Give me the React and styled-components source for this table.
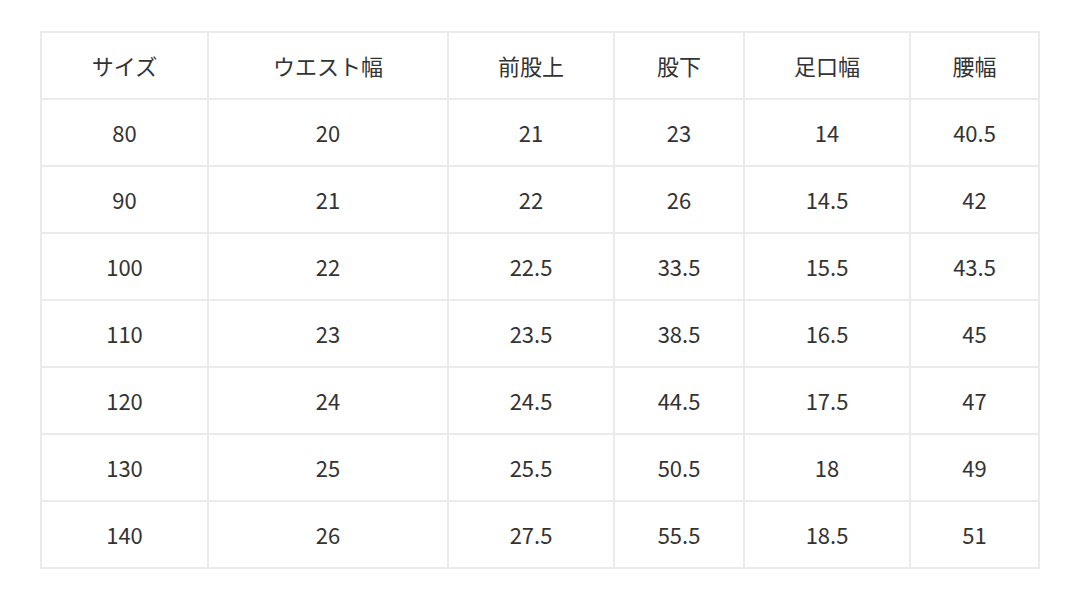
import { createGlobalStyle, styled } from "styled-components";

const GlobalStyle = createGlobalStyle`
  body {
    margin: 0;
    background: #ffffff;
    font-family: "Noto Sans CJK JP", "Noto Sans", sans-serif;
  }
`;

const headers = ["サイズ", "ウエスト幅", "前股上", "股下", "足口幅", "腰幅"];
const widths = [167, 240, 166, 130, 166, 129];
const rows = [
  ["80", "20", "21", "23", "14", "40.5"],
  ["90", "21", "22", "26", "14.5", "42"],
  ["100", "22", "22.5", "33.5", "15.5", "43.5"],
  ["110", "23", "23.5", "38.5", "16.5", "45"],
  ["120", "24", "24.5", "44.5", "17.5", "47"],
  ["130", "25", "25.5", "50.5", "18", "49"],
  ["140", "26", "27.5", "55.5", "18.5", "51"],
];

export default function App() {
  return (
    <SPage>
      <GlobalStyle />
      <STable>
        <colgroup>
          {widths.map((w, i) => (
            <col key={i} style={{ width: w }} />
          ))}
        </colgroup>
        <thead>
          <tr>
            {headers.map((h) => (
              <SCell as="th" key={h}>
                {h}
              </SCell>
            ))}
          </tr>
        </thead>
        <tbody>
          {rows.map((r) => (
            <tr key={r[0]}>
              {r.map((v, i) => (
                <SCell key={i}>{v}</SCell>
              ))}
            </tr>
          ))}
        </tbody>
      </STable>
    </SPage>
  );
}

const SPage = styled.div`
  padding: 31px 40px;
`;

const STable = styled.table`
  width: 998px;
  table-layout: fixed;
  border-collapse: collapse;
  border: 2px solid #ebebeb;
`;

const SCell = styled.td`
  height: 63px;
  padding: 0 0 2px;
  border: 2px solid #ebebeb;
  text-align: center;
  vertical-align: middle;
  font-size: 22px;
  font-weight: 400;
  color: #333333;
`;
